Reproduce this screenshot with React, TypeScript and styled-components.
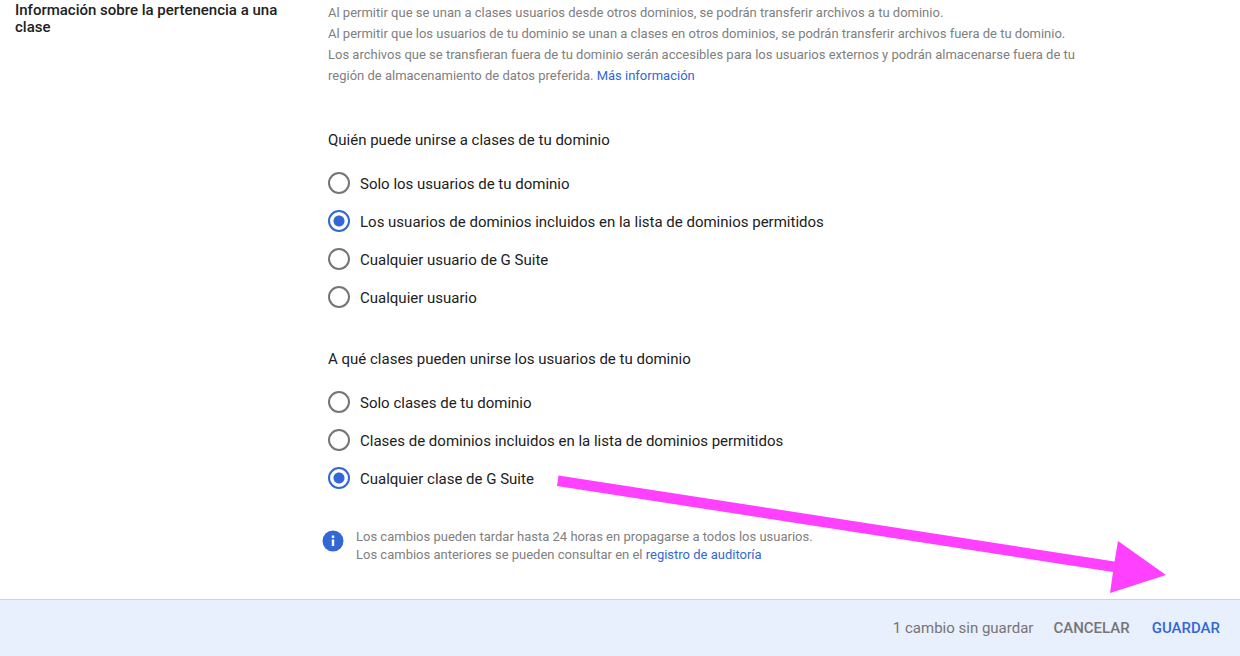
import React, { useState } from "react";
import styled, { createGlobalStyle } from "styled-components";

const GlobalStyle = createGlobalStyle`
  *, *::before, *::after { box-sizing: border-box; }
  body {
    margin: 0;
    background: #fff;
    color: #212121;
    font-family: Roboto, "Liberation Sans", sans-serif;
  }
`;

const Page = styled.div`
  position: relative;
  display: flex;
  flex-direction: column;
  min-height: 100vh;
`;

const Main = styled.main`
  flex: 1;
  display: grid;
  grid-template-columns: 265px minmax(0, 760px);
  column-gap: 48px;
  padding: 2px 15px 32px;
`;

const Title = styled.h2`
  margin: 0;
  font-size: 15px;
  line-height: 17px;
  font-weight: 500;
`;

const Description = styled.div`
  color: #808080;
  font-size: 13px;
  line-height: 21px;
  p { margin: 0; }
`;

const Link = styled.a`
  color: #3367d6;
  text-decoration: none;
`;

const Group = styled.fieldset<{ $gap: number }>`
  min-width: 0;
  margin: ${(p) => p.$gap}px 0 0;
  padding: 0;
  border: 0;
`;

const Legend = styled.legend`
  padding: 0;
  margin-bottom: 14px;
  font-size: 15px;
  line-height: 20px;
`;

const Option = styled.label`
  display: flex;
  align-items: center;
  gap: 10px;
  min-height: 38px;
  font-size: 15px;
  line-height: 20px;
  cursor: pointer;
`;

const OptionText = styled.span`
  padding-top: 2px;
`;

const Radio = styled.input`
  appearance: none;
  flex: none;
  width: 22px;
  height: 22px;
  margin: 0;
  border: 2px solid #757575;
  border-radius: 50%;
  &:checked {
    border-color: #3367d6;
    background: radial-gradient(circle, #3367d6 5px, transparent 6px);
  }
`;

const Notice = styled.div`
  display: flex;
  gap: 12px;
  margin: 31px 0 0 -6px;
  color: #808080;
  font-size: 13px;
  line-height: 18px;
  p { margin: 0; }
  svg { flex: none; margin-top: 2px; }
`;

const Footer = styled.footer`
  display: flex;
  align-items: center;
  justify-content: flex-end;
  gap: 20px;
  min-height: 57px;
  padding: 0 20px;
  border-top: 1px solid #cdd3de;
  background: #e8effd;
  color: #757575;
  font-size: 15px;
  line-height: 20px;
`;

const Action = styled.button<{ $primary?: boolean }>`
  padding: 0;
  border: 0;
  background: none;
  color: ${(p) => (p.$primary ? "#3367d6" : "#757575")};
  font: 500 15px/20px Roboto, "Liberation Sans", sans-serif;
  cursor: pointer;
  & + & { margin-left: 2px; }
`;

const Arrow = styled.svg`
  position: absolute;
  right: 72px;
  bottom: 62px;
  pointer-events: none;
`;

type Choices = {
  name: string;
  legend: string;
  options: string[];
  initial: number;
  gap: number;
};

function RadioGroup({ name, legend, options, initial, gap }: Choices) {
  const [selected, setSelected] = useState(initial);
  return (
    <Group $gap={gap}>
      <Legend>{legend}</Legend>
      {options.map((text, i) => (
        <Option key={text}>
          <Radio type="radio" name={name} checked={selected === i} onChange={() => setSelected(i)} />
          <OptionText>{text}</OptionText>
        </Option>
      ))}
    </Group>
  );
}

export default function App() {
  return (
    <Page>
      <GlobalStyle />
      <Main>
        <Title>Información sobre la pertenencia a una clase</Title>
        <div>
          <Description>
            <p>Al permitir que se unan a clases usuarios desde otros dominios, se podrán transferir archivos a tu dominio.</p>
            <p>Al permitir que los usuarios de tu dominio se unan a clases en otros dominios, se podrán transferir archivos fuera de tu dominio.</p>
            <p>
              Los archivos que se transfieran fuera de tu dominio serán accesibles para los usuarios externos y podrán almacenarse fuera de tu
              región de almacenamiento de datos preferida. <Link href="#informacion">Más información</Link>
            </p>
          </Description>
          <RadioGroup
            name="unirse"
            legend="Quién puede unirse a clases de tu dominio"
            options={[
              "Solo los usuarios de tu dominio",
              "Los usuarios de dominios incluidos en la lista de dominios permitidos",
              "Cualquier usuario de G Suite",
              "Cualquier usuario",
            ]}
            initial={1}
            gap={44}
          />
          <RadioGroup
            name="clases"
            legend="A qué clases pueden unirse los usuarios de tu dominio"
            options={[
              "Solo clases de tu dominio",
              "Clases de dominios incluidos en la lista de dominios permitidos",
              "Cualquier clase de G Suite",
            ]}
            initial={2}
            gap={33}
          />
          <Notice>
            <svg width="22" height="22" viewBox="0 0 22 22" aria-hidden="true">
              <circle cx="11" cy="11" r="10.5" fill="#3367d6" />
              <path d="M9.8 5.6h2.4V8H9.8zM9.8 9.6h2.4v6.4H9.8z" fill="#fff" />
            </svg>
            <div>
              <p>Los cambios pueden tardar hasta 24 horas en propagarse a todos los usuarios.</p>
              <p>
                Los cambios anteriores se pueden consultar en el <Link href="#auditoria">registro de auditoría</Link>
              </p>
            </div>
          </Notice>
        </div>
      </Main>
      <Footer>
        <span>1 cambio sin guardar</span>
        <Action type="button">CANCELAR</Action>
        <Action type="button" $primary>GUARDAR</Action>
      </Footer>
      <Arrow width="612" height="120" viewBox="0 0 612 120" aria-hidden="true">
        <path d="M2.5 1.5 558.5 87.5 562 67 610 101 554 119 557 98 1 12Z" fill="#ff40ff" />
      </Arrow>
    </Page>
  );
}
